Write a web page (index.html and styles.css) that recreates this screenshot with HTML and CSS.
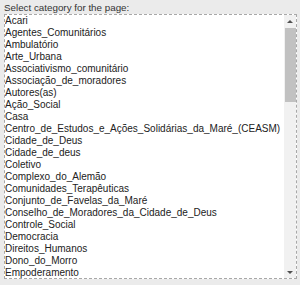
FILE: index.html
```html
<!DOCTYPE html>
<html>
<head>
<meta charset="utf-8">
<link rel="stylesheet" href="styles.css">
</head>
<body>
<div class="field">
  <label class="label">Select category for the page:</label>
  <div class="listbox">
    <ul class="options">
      <li>Acari</li>
      <li>Agentes_Comunitários</li>
      <li>Ambulatório</li>
      <li>Arte_Urbana</li>
      <li>Associativismo_comunitário</li>
      <li>Associação_de_moradores</li>
      <li>Autores(as)</li>
      <li>Ação_Social</li>
      <li>Casa</li>
      <li>Centro_de_Estudos_e_Ações_Solidárias_da_Maré_(CEASM)</li>
      <li>Cidade_de_Deus</li>
      <li>Cidade_de_deus</li>
      <li>Coletivo</li>
      <li>Complexo_do_Alemão</li>
      <li>Comunidades_Terapêuticas</li>
      <li>Conjunto_de_Favelas_da_Maré</li>
      <li>Conselho_de_Moradores_da_Cidade_de_Deus</li>
      <li>Controle_Social</li>
      <li>Democracia</li>
      <li>Direitos_Humanos</li>
      <li>Dono_do_Morro</li>
      <li>Empoderamento</li>
    </ul>
    <div class="scrollbar">
      <div class="arrow up"></div>
      <div class="track"><div class="thumb"></div></div>
      <div class="arrow down"></div>
    </div>
  </div>
</div>
</body>
</html>
```
FILE: styles.css
```css
html, body {
  margin: 0;
  padding: 0;
  background: #ebebeb;
}
body {
  padding: 0 3px 0 4px;
  font-family: "Liberation Sans", Arial, sans-serif;
  color: #222;
}
.field {
  display: flex;
  flex-direction: column;
}
.label {
  font-size: 9.8px;
  line-height: 12px;
  padding-top: 2px;
  color: #333;
}
.listbox {
  display: flex;
  height: 265px;
  box-sizing: border-box;
  border: 1px dashed #a8a8a8;
  background: #fff;
}
.options {
  flex: 1;
  list-style: none;
  margin: 0;
  padding: 0;
  overflow: hidden;
  font-size: 10px;
  line-height: 12px;
  white-space: nowrap;
}
.scrollbar {
  width: 12px;
  display: flex;
  flex-direction: column;
  background: #f1f1f1;
}
.track {
  flex: 1;
  display: flex;
  flex-direction: column;
}
.thumb {
  height: 74px;
  margin: 1px 0 0 1px;
  background: #c1c1c1;
}
.arrow {
  height: 12px;
  display: flex;
  align-items: center;
  justify-content: center;
}
.arrow::before {
  content: "";
  width: 0;
  height: 0;
  border-left: 3px solid transparent;
  border-right: 3px solid transparent;
}
.arrow.up::before {
  border-bottom: 3px solid #505050;
}
.arrow.down::before {
  border-top: 3px solid #505050;
}
```
